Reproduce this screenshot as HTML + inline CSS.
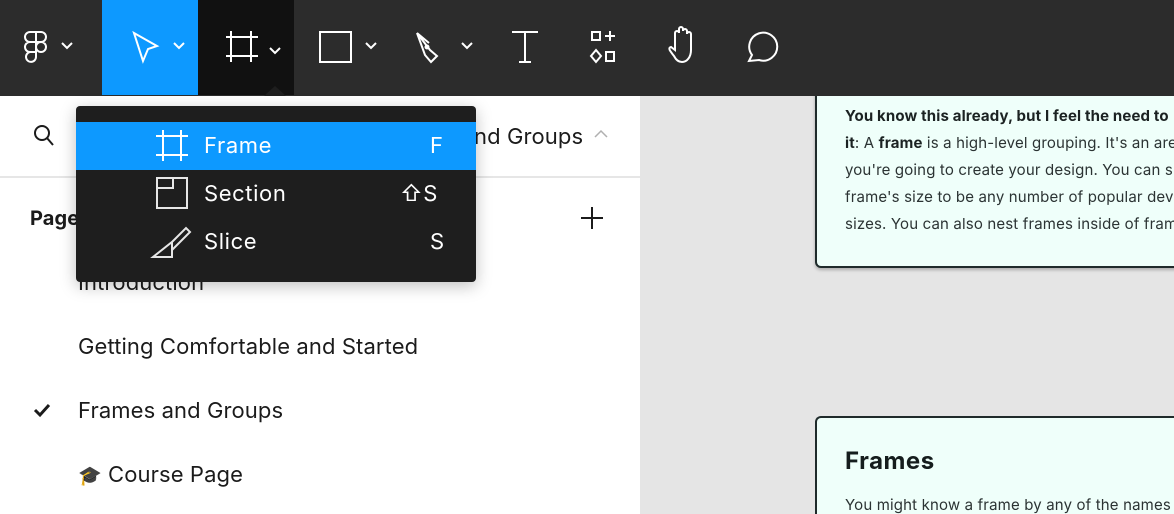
<!DOCTYPE html>
<html><head><meta charset="utf-8"><style>
*{margin:0;padding:0;box-sizing:border-box}
html,body{width:1174px;height:514px;overflow:hidden}
body{position:relative;background:#e5e5e5;font-family:"Inter","Liberation Sans",sans-serif}
#w{position:absolute;left:0;top:0;width:1174px;height:514px;overflow:hidden}
.tb{position:absolute;left:0;top:0;width:1174px;height:96px;background:#2c2c2c}
.abs{position:absolute}
svg{position:absolute;overflow:visible}
.panel{position:absolute;left:0;top:96px;width:640px;height:418px;background:#fff}
.t{position:absolute;white-space:nowrap;color:#1b1b1b;letter-spacing:0.1px}
.card{position:absolute;background:#effffa;border:2px solid #1f2b2b;border-radius:6px;box-shadow:0 2px 3px rgba(0,0,0,.25)}
.ct{position:absolute;left:845px;white-space:nowrap;font-size:15px;color:#2b3333;letter-spacing:0.15px}
.menu{position:absolute;left:76px;top:106px;width:400px;height:176px;background:#1e1e1e;border-radius:4px;box-shadow:0 4px 16px rgba(0,0,0,.25)}
.mi{position:absolute;left:0;width:400px;height:48px;color:#fff;font-size:22px;letter-spacing:0.6px}
.mi span{position:absolute;top:11px}
</style></head><body><div id="w">
<div class="card" style="left:815px;top:60px;width:400px;height:208px"></div>
<div class="ct" style="top:106px;font-weight:bold;color:#1b2222">You know this already, but I feel the need to</div>
<div class="ct" style="top:133px"><b style="color:#1b2222">it</b>: A <b style="color:#1b2222">frame</b> is a high-level grouping. It's an area</div>
<div class="ct" style="top:160px">you're going to create your design. You can s</div>
<div class="ct" style="top:187px">frame's size to be any number of popular dev</div>
<div class="ct" style="top:214px">sizes. You can also nest frames inside of fram</div>
<div class="card" style="left:815px;top:416px;width:359px;height:98px;border-bottom:none;border-right:none;border-radius:6px 0 0 0;box-shadow:none"></div>
<div class="ct" style="top:446px;font-size:24px;font-weight:bold;color:#151d1d;letter-spacing:0.5px">Frames</div>
<div class="ct" style="top:495px">You might know a frame by any of the names</div>

<div class="tb"></div>
<div class="abs" style="left:102px;top:0;width:96px;height:95px;background:#0d99ff"></div>
<div class="abs" style="left:198px;top:0;width:96px;height:95px;background:#111"></div>
<svg width="1174" height="96" style="left:0;top:0" fill="none" stroke="#fff" stroke-width="2">
<path d="M30 32h6v10h-6a5 5 0 0 1 0-10z M36 32h5a5 5 0 0 1 0 10h-5z M30 42h6v10h-6a5 5 0 0 1 0-10z M41 42a5 5 0 1 1 0 10a5 5 0 1 1 0-10z M30 52h6v5a5 5 0 1 1-6-5z"/>
<path d="M62 43l5 5 5-5"/>
<path d="M134 33l23 13-9 3-5 12z"/><path d="M174 43l5 5 5-5"/>
<path d="M231 31v31M251 31v31M226 37h32M226 56h32"/>
<path d="M270 48l5 5 5-5"/>
<rect x="320" y="32" width="31" height="30"/><path d="M366 43l5 5 5-5"/>
<path d="M417 33l8 22 6 7 6-6-7-6z M417 33l12 10"/><circle cx="427" cy="47" r="1.5" fill="#fff"/><path d="M462 43l5 5 5-5"/>
<path d="M512 32h26M525 32v30M519 62h12"/>
<rect x="592" y="32" width="8" height="8"/><path d="M610 31v10M605 36h10"/><path d="M596 50l5 6-5 6-5-6z"/><rect x="606" y="52" width="8" height="9"/>
<path d="M674 56c-3-4-7-8-3-9l4 3V33a2 2 0 0 1 4 0v-4a2 2 0 0 1 4 0v2a2 2 0 0 1 4 0v3a2 2 0 0 1 4 0v16c0 7-4 12-9 12-3 0-6-2-8-6z"/>
<path d="M749 61l3-6a14 14 0 1 1 7 5z"/>
<path d="M264 96l11-10 11 10z" fill="#1e1e1e" stroke="none"/>
</svg>
<div class="panel"></div>
<div class="abs" style="left:0;top:176px;width:640px;height:2px;background:#e6e6e6"></div>
<svg width="40" height="40" style="left:30px;top:122px" fill="none" stroke="#1b1b1b" stroke-width="2"><circle cx="12" cy="11" r="7"/><path d="M17 16l6 7"/></svg>
<div class="t" style="left:378px;top:124px;font-size:22px">Frames and Groups</div>
<svg width="20" height="20" style="left:594px;top:130px" fill="none" stroke="#b0b0b0" stroke-width="1.5"><path d="M1 7l6-6 6 6"/></svg>
<div class="t" style="left:30px;top:206px;font-size:20px;font-weight:bold">Pages</div>
<svg width="30" height="30" style="left:580px;top:206px" fill="none" stroke="#1b1b1b" stroke-width="2"><path d="M12 1v22M1 12h22"/></svg>
<div class="t" style="left:78px;top:270px;font-size:22px">Introduction</div>
<div class="t" style="left:78px;top:334px;font-size:22px">Getting Comfortable and Started</div>
<div class="t" style="left:78px;top:398px;font-size:22px">Frames and Groups</div>
<svg width="20" height="20" style="left:34px;top:402px" fill="none" stroke="#1b1b1b" stroke-width="3"><path d="M1 8l5 5 9-10"/></svg>
<div class="t" style="left:78px;top:462px;font-size:22px"><span style="font-family:'Noto Color Emoji','DejaVu Sans',sans-serif;font-size:19px">🎓</span> Course Page</div>

<div class="menu">
 <div class="mi" style="top:16px;background:#0d99ff"><span style="left:128px">Frame</span><span style="left:354px">F</span></div>
 <div class="mi" style="top:64px"><span style="left:128px">Section</span><span style="left:324px">⇧S</span></div>
 <div class="mi" style="top:112px"><span style="left:128px">Slice</span><span style="left:354px">S</span></div>
 <svg width="400" height="176" style="left:0;top:0" fill="none" stroke="#fff" stroke-width="2">
  <path d="M87 24v31M105 24v31M80 30h32M80 49h32"/>
  <rect x="81" y="72" width="30" height="30" stroke="#e6e6e6"/><path d="M81 82h16V72" stroke="#e6e6e6"/>
  <path d="M77 151h19v-15z M96 136l14-14 4 4-18 18" stroke="#e6e6e6"/>
 </svg>
</div>
</div></body></html>
